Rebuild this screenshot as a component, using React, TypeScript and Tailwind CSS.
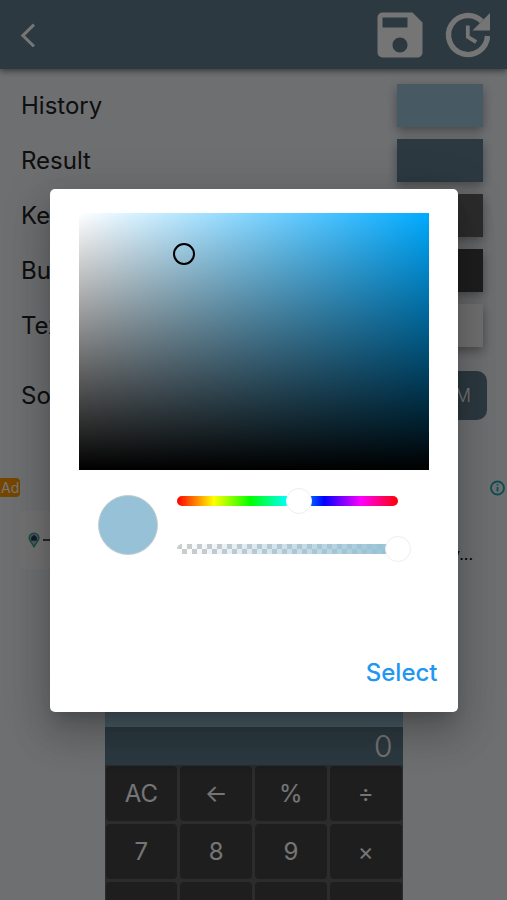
import { useState } from "react"
import { MdSave } from "react-icons/md"

type Swatch = {
  label: string
  className: string
}

const SWATCHES: Swatch[] = [
  { label: "History", className: "bg-[#9bc4d8]" },
  { label: "Result", className: "bg-[#607d8b]" },
  { label: "Keypad", className: "bg-[#616161]" },
  { label: "Button", className: "bg-[#424242]" },
  { label: "Text", className: "bg-[#f5f5f5]" },
]

const KEYS = ["AC", "←", "%", "÷", "7", "8", "9", "×", "4", "5", "6", "−"]

const hsvToRgb = (h: number, s: number, v: number) => {
  const channel = (n: number) => {
    const k = (n + h / 60) % 6
    return Math.round(255 * (v - v * s * Math.max(0, Math.min(k, 4 - k, 1))))
  }
  return `${channel(5)} ${channel(3)} ${channel(1)}`
}

const Header = () => (
  <header className="relative flex h-[69px] items-center justify-between bg-[#607d8b] pr-[9px] pl-4 text-white shadow-[0_2px_6px_rgba(0,0,0,0.5)]">
    <button aria-label="Back" className="flex size-6 items-center justify-center">
      <svg width="24" height="24" viewBox="0 0 24 24" fill="none" stroke="currentColor" strokeWidth="3">
        <path d="M18 1.6 6.8 12.6 18 23.4" />
      </svg>
    </button>
    <div className="flex items-center gap-2">
      <button aria-label="Save">
        <MdSave size={60} />
      </button>
      <button aria-label="Reset">
        <svg width="60" height="60" viewBox="0 0 60 60" fill="none" stroke="currentColor">
          <path d="M49.5 31A19.5 19.5 0 1 1 43.8 16.2" strokeWidth="5.4" />
          <path d="M29.8 20.5V32l8.4 5" strokeWidth="3.8" />
          <path d="M52 8v17.5H34.5Z" fill="currentColor" stroke="none" />
        </svg>
      </button>
    </div>
  </header>
)

const AdBanner = () => (
  <section className="mt-[58px]">
    <div className="flex items-center justify-between">
      <span className="flex h-[19px] items-center rounded-r-sm bg-[#ff9800] px-px text-sm text-white">Ad</span>
      <svg width="18" height="18" viewBox="0 0 18 18" fill="none" stroke="#20a5b5" strokeWidth="1.8">
        <circle cx="8.5" cy="9" r="6.5" />
        <path d="M8.5 8v4.6M8.5 5v1.6" />
      </svg>
    </div>
    <div className="mt-[14px] flex items-end justify-between pr-[34px] pl-5">
      <div className="flex h-[58px] w-28 items-center gap-[3px] rounded-sm bg-[#f8f8fa] pl-2">
        <svg width="12" height="16" viewBox="0 0 12 16">
          <path d="M6 1.2A4.8 4.8 0 0 0 1.2 6c0 3 2.7 4.6 4.8 8.6 2.1-4 4.8-5.6 4.8-8.6A4.8 4.8 0 0 0 6 1.2Z" fill="#a9cfc4" stroke="#3fa98c" strokeWidth="1.6" />
          <path d="M2.6 5.8 6 2.8l3.4 3H8.8v3H3.2v-3Z" fill="#33376e" />
        </svg>
        <span className="h-0.5 w-12 bg-[#555]" />
      </div>
      <p className="pb-[3px] text-base text-black">Find a home nearby...</p>
    </div>
  </section>
)

const Calculator = () => (
  <section className="mx-auto mt-5 w-[298px] bg-[#616161] text-white">
    <div className="h-[138px] bg-[#9bc4d8]" />
    <div className="flex h-[38px] items-center justify-end bg-[#607d8b] pr-2.5 text-3xl font-light">0</div>
    <div className="grid grid-cols-4 gap-[3px] p-px">
      {KEYS.map((key) => (
        <button key={key} className="h-[55px] rounded-[4px] bg-[#424242] text-2xl">
          {key}
        </button>
      ))}
    </div>
  </section>
)

const Slider = ({
  label, max, value, onChange, children,
}: {
  label: string; max: number; value: number; onChange: (value: number) => void; children: React.ReactNode
}) => (
  <div className="relative flex h-[26px] items-center">
    {children}
    {/* the thumb overhangs both ends of the track by its radius */}
    <input
      type="range"
      aria-label={label}
      min={0}
      max={max}
      value={value}
      onChange={(e) => onChange(Number(e.target.value))}
      className="absolute -left-[13px] h-[26px] w-[calc(100%+26px)] cursor-pointer appearance-none bg-transparent outline-none [&::-webkit-slider-thumb]:size-[26px] [&::-webkit-slider-thumb]:appearance-none [&::-webkit-slider-thumb]:rounded-full [&::-webkit-slider-thumb]:border [&::-webkit-slider-thumb]:border-[#eeeeee] [&::-webkit-slider-thumb]:bg-white"
    />
  </div>
)

const ColorDialog = () => {
  const [hue, setHue] = useState(200)
  const [alpha, setAlpha] = useState(100)
  const saturation = 0.3
  const brightness = 0.84
  const rgb = hsvToRgb(hue, saturation, brightness)

  return (
    <div
      role="dialog"
      aria-label="Pick a color"
      className="w-full max-w-[408px] rounded-[5px] bg-white pt-6 pb-[15px] shadow-[0_11px_15px_-7px_rgba(0,0,0,0.2),0_24px_38px_3px_rgba(0,0,0,0.14),0_9px_46px_8px_rgba(0,0,0,0.12)]"
    >
      <div className="px-[29px]">
        <div
          className="relative h-[257px] bg-[linear-gradient(to_top,#000,transparent),linear-gradient(to_right,#fff,transparent)]"
          style={{ backgroundColor: `hsl(${hue} 100% 50%)` }}
        >
          <span
            className="absolute size-[22px] -translate-x-1/2 -translate-y-1/2 rounded-full border-2 border-black"
            style={{ left: `${saturation * 100}%`, top: `${(1 - brightness) * 100}%` }}
          />
        </div>

        <div className="mt-[18px] flex items-center gap-[19px] pr-[31px] pl-[19px]">
          <div
            className="size-[60px] shrink-0 rounded-full border border-[#c3cdd1]"
            style={{ backgroundColor: `rgb(${rgb} / ${alpha}%)` }}
          />
          <div className="flex flex-1 flex-col gap-[22px]">
            <Slider label="Hue" max={360} value={hue} onChange={setHue}>
              <div className="h-2.5 w-full rounded-full bg-[linear-gradient(to_right,#f00,#ff0,#0f0,#0ff,#00f,#f0f,#f00)]" />
            </Slider>
            <Slider label="Opacity" max={100} value={alpha} onChange={setAlpha}>
              <div className="h-2.5 w-full overflow-hidden rounded-full bg-[conic-gradient(#fff_25%,#ccc_0_50%,#fff_0_75%,#ccc_0)] bg-[length:10px_10px]">
                <div
                  className="h-full"
                  style={{ backgroundImage: `linear-gradient(to right, rgb(${rgb} / 0), rgb(${rgb}))` }}
                />
              </div>
            </Slider>
          </div>
        </div>
      </div>

      <div className="mt-[87px] flex justify-end pr-2">
        <button className="h-12 px-3 text-2xl font-medium text-[#2196f3]">Select</button>
      </div>
    </div>
  )
}

export default function App() {
  return (
    <div className="relative h-screen overflow-hidden bg-[#f0f2f6] font-['Inter',sans-serif] text-[#212121]">
      <Header />

      <main>
        <div className="flex flex-col gap-3 pt-[15px] pr-6 pl-[21px]">
          {SWATCHES.map((s) => (
            <div key={s.label} className="flex h-[43px] items-center justify-between text-2xl">
              <span>{s.label}</span>
              <button
                aria-label={`${s.label} color`}
                className={`h-full w-[86px] shadow-[0_4px_10px_rgba(0,0,0,0.35)] ${s.className}`}
              />
            </div>
          ))}
        </div>

        <div className="mt-6 flex items-center justify-between pr-5 pl-[21px] text-2xl">
          <span>Sound</span>
          <button className="h-[49px] rounded-[10px] bg-[#607d8b] px-4 text-lg font-light text-white">CUSTOM</button>
        </div>

        <AdBanner />
        <Calculator />
      </main>

      {/* Color picker over the dimmed page */}
      <div className="absolute inset-0 flex items-center justify-center bg-black/54 px-5">
        <ColorDialog />
      </div>
    </div>
  )
}
